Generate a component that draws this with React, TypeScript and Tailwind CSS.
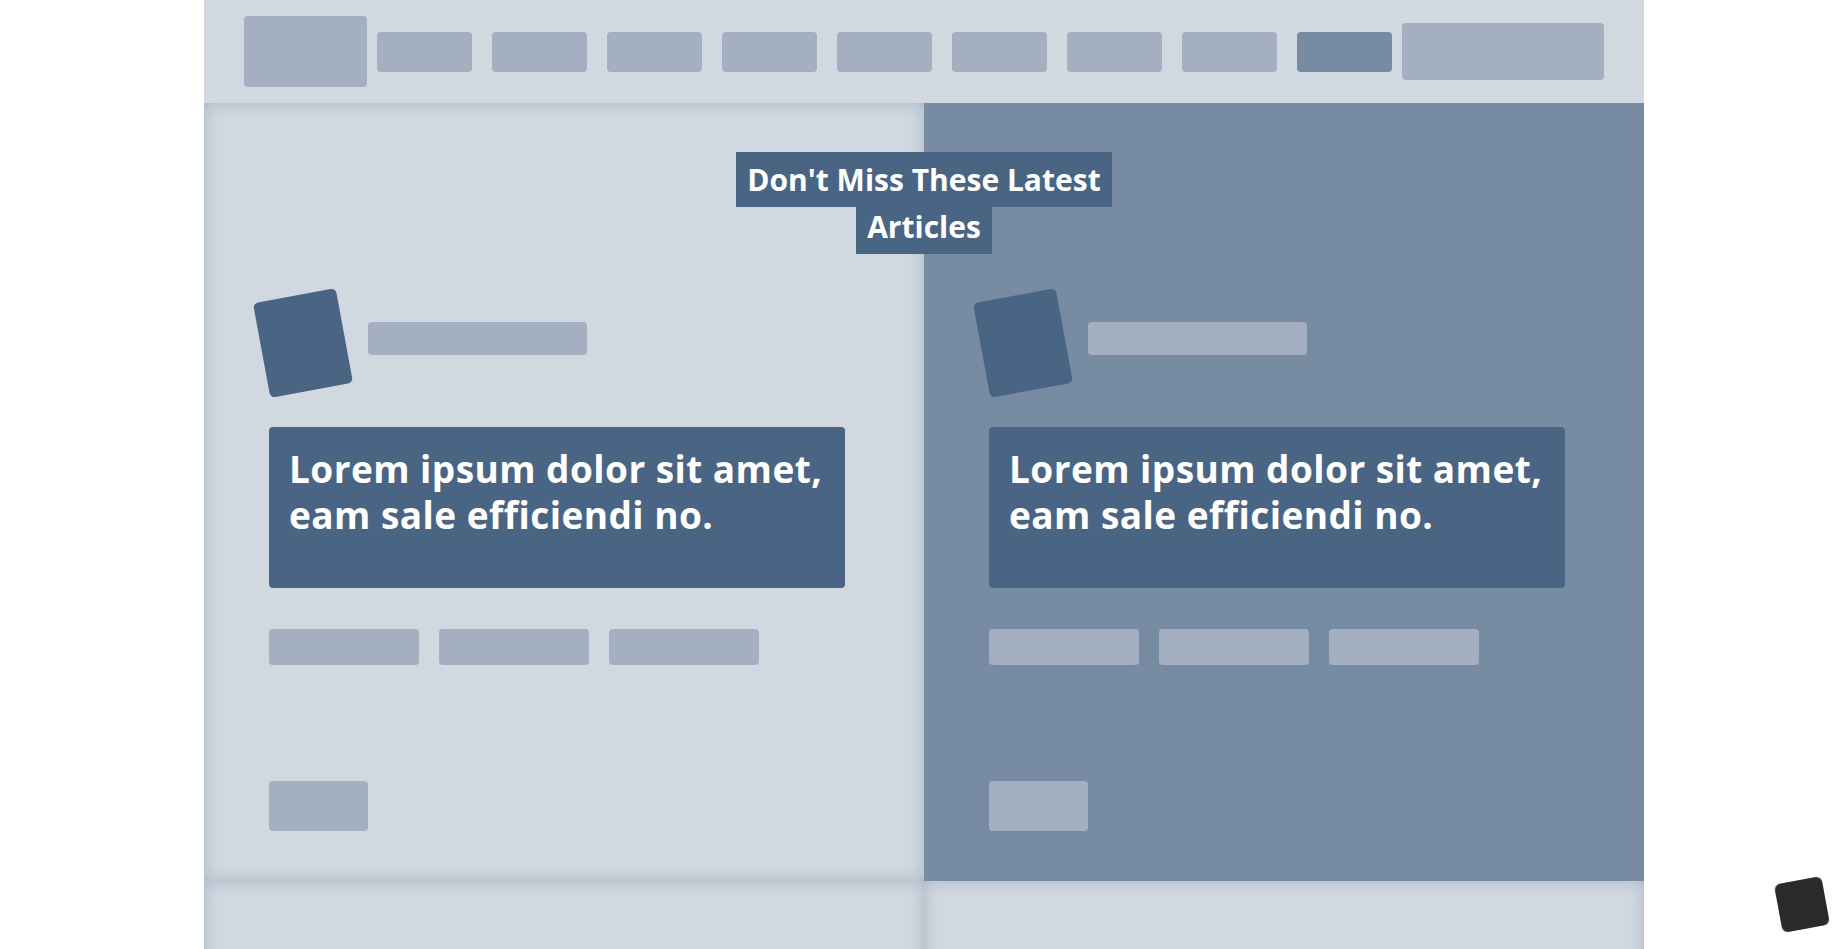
import React from "react";

function Card({ active }: { active?: boolean }) {
  return (
    <div
      className={
        active
          ? "h-[778px] bg-[#778ba3] pl-[65px] pt-[192px]"
          : "h-[778px] bg-[#d1d8e0] pl-[65px] pt-[192px] shadow-[inset_0_0_16px_rgba(119,139,163,0.45)]"
      }
    >
      <div className="flex items-start">
        <div className="-ml-[8px] h-[96px] w-[84px] shrink-0 -rotate-[10.5deg] rounded-[5px] bg-[#4a6584]" />
        <div className="ml-[23px] mt-[27px] h-[33px] w-[219px] rounded-[4px] bg-[#a4afc1]" />
      </div>
      <div className="mt-[36px] h-[161px] w-[576px] rounded-[4px] bg-[#4a6584] pl-[20px] pr-[10px] pt-[19px]">
        <p className="font-['Open_Sans',sans-serif] text-[37px] font-bold leading-[46px] tracking-[0.012em] text-white">
          Lorem ipsum dolor sit amet, eam sale efficiendi no.
        </p>
      </div>
      <div className="mt-[41px] flex gap-[20px]">
        <div className="h-[36px] w-[150px] rounded-[4px] bg-[#a4afc1]" />
        <div className="h-[36px] w-[150px] rounded-[4px] bg-[#a4afc1]" />
        <div className="h-[36px] w-[150px] rounded-[4px] bg-[#a4afc1]" />
      </div>
      <div className="mt-[116px] h-[50px] w-[99px] rounded-[4px] bg-[#a4afc1]" />
    </div>
  );
}

export default function App() {
  const buttons = [0, 1, 2, 3, 4, 5, 6, 7, 8];
  return (
    <div className="min-h-screen bg-white font-['Open_Sans',sans-serif]">
      <div className="mx-auto w-[1440px]">
        <nav className="flex h-[103px] items-center bg-[#d1d8e0] px-[40px]">
          <div className="h-[71px] w-[123px] rounded-[4px] bg-[#a4afc1]" />
          {buttons.map((i) => (
            <div
              key={i}
              className={
                i === 8
                  ? "mx-[10px] h-[40px] w-[95px] rounded-[4px] bg-[#778ba3]"
                  : "mx-[10px] h-[40px] w-[95px] rounded-[4px] bg-[#a4afc1]"
              }
            />
          ))}
          <div className="h-[57px] w-[202px] rounded-[4px] bg-[#a4afc1]" />
        </nav>
        <section className="relative">
          <div className="grid grid-cols-2">
            <Card />
            <Card active />
          </div>
          <h2 className="absolute left-0 right-0 top-[53px] z-10 text-center text-[30px] font-bold leading-[47px] text-white">
            <span className="box-decoration-clone bg-[#4a6584] px-[11px] py-[7px]">
              Don't Miss These Latest
              <br />
              Articles
            </span>
          </h2>
          <div className="grid grid-cols-2">
            <div className="h-[300px] bg-[#d1d8e0] shadow-[inset_0_0_16px_rgba(119,139,163,0.45)]" />
            <div className="h-[300px] bg-[#d1d8e0] shadow-[inset_0_0_16px_rgba(119,139,163,0.45)]" />
          </div>
        </section>
      </div>
      <div className="fixed bottom-[20px] right-[22px] h-[49px] w-[48px] -rotate-[10.5deg] rounded-[6px] bg-[#2a2a2a]" />
    </div>
  );
}
